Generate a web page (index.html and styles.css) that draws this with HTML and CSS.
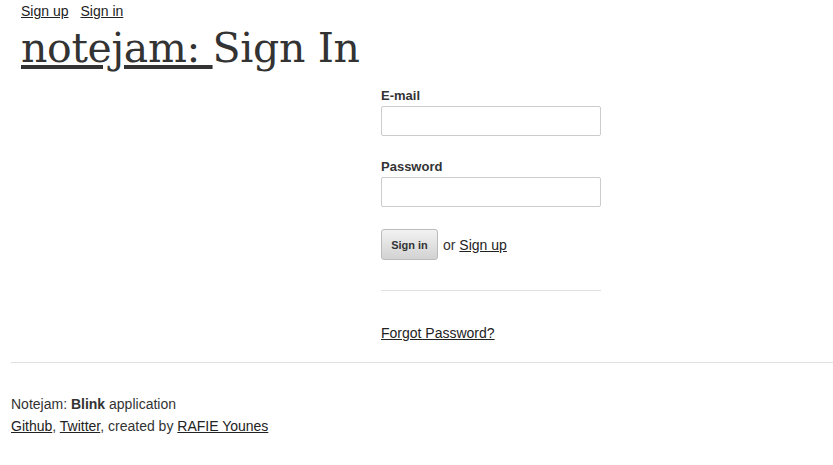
FILE: index.html
```html
<!DOCTYPE html>
<html>
<head>
<meta charset="utf-8">
<link rel="stylesheet" href="styles.css">
</head>
<body>
<div class="container">
  <div class="top">
    <nav class="auth-links"><a href="#">Sign up</a><a href="#">Sign in</a></nav>
    <h1 class="title"><a href="#">notejam: </a>Sign In</h1>
  </div>
  <div class="content">
    <form class="form">
      <label class="label">E-mail</label>
      <input class="input" type="text">
      <label class="label">Password</label>
      <input class="input" type="password">
      <div class="actions">
        <button type="button" class="btn">Sign in</button>
        <span class="or">or <a href="#">Sign up</a></span>
      </div>
      <hr class="sep">
      <a href="#" class="forgot">Forgot Password?</a>
    </form>
  </div>
  <hr class="footer-line">
  <footer class="footer">
    <p>Notejam: <strong>Blink</strong> application</p>
    <p><a href="#">Github</a>, <a href="#">Twitter</a>, created by <a href="#">RAFIE Younes</a></p>
  </footer>
</div>
</body>
</html>
```
FILE: styles.css
```css
html, body {
  margin: 0;
  padding: 0;
  background: #fff;
}
body {
  font-family: "Liberation Sans", Arial, sans-serif;
  font-size: 14px;
  color: #333;
}
a { color: #222; }
.container {
  padding: 0 0 0 11px;
}
.top {
  padding-left: 10px;
}
.auth-links {
  padding-top: 3px;
  line-height: 16px;
  display: flex;
  gap: 12px;
}
.title {
  margin: 5px 0 0 0;
  font-family: "DejaVu Serif", Georgia, serif;
  font-weight: normal;
  font-size: 41px;
  letter-spacing: -0.35px;
  line-height: 48px;
  color: #333;
}
.title a { color: #333; }
.content {
  padding-left: 370px;
  padding-top: 16px;
}
.form {
  width: 220px;
  display: flex;
  flex-direction: column;
}
.label {
  font-weight: bold;
  font-size: 13px;
  line-height: 16px;
  margin-bottom: 2px;
}
.input {
  box-sizing: border-box;
  height: 30px;
  width: 220px;
  border: 1px solid #ccc;
  border-radius: 2px;
  margin: 0 0 23px 0;
}
.actions {
  margin-top: -1px;
  display: flex;
  align-items: center;
  gap: 5px;
}
.btn {
  box-sizing: border-box;
  width: 57px;
  height: 31px;
  border: 1px solid #bbb;
  border-radius: 3px;
  background: linear-gradient(#f2f2f2, #d2d2d2);
  font-family: "Liberation Sans", Arial, sans-serif;
  font-weight: bold;
  font-size: 11px;
  color: #333;
  padding: 0;
}
.or { font-size: 14px; }
.sep {
  width: 220px;
  margin: 30px 0 0 0;
  border: 0;
  border-top: 1px solid #e1e1e1;
}
.forgot {
  margin-top: 34px;
  line-height: 16px;
  align-self: flex-start;
}
.footer-line {
  margin: 21px 0 0 0;
  border: 0;
  border-top: 1px solid #e1e1e1;
}
.footer {
  padding-top: 30px;
}
.footer p {
  margin: 0;
  line-height: 22px;
}
```
